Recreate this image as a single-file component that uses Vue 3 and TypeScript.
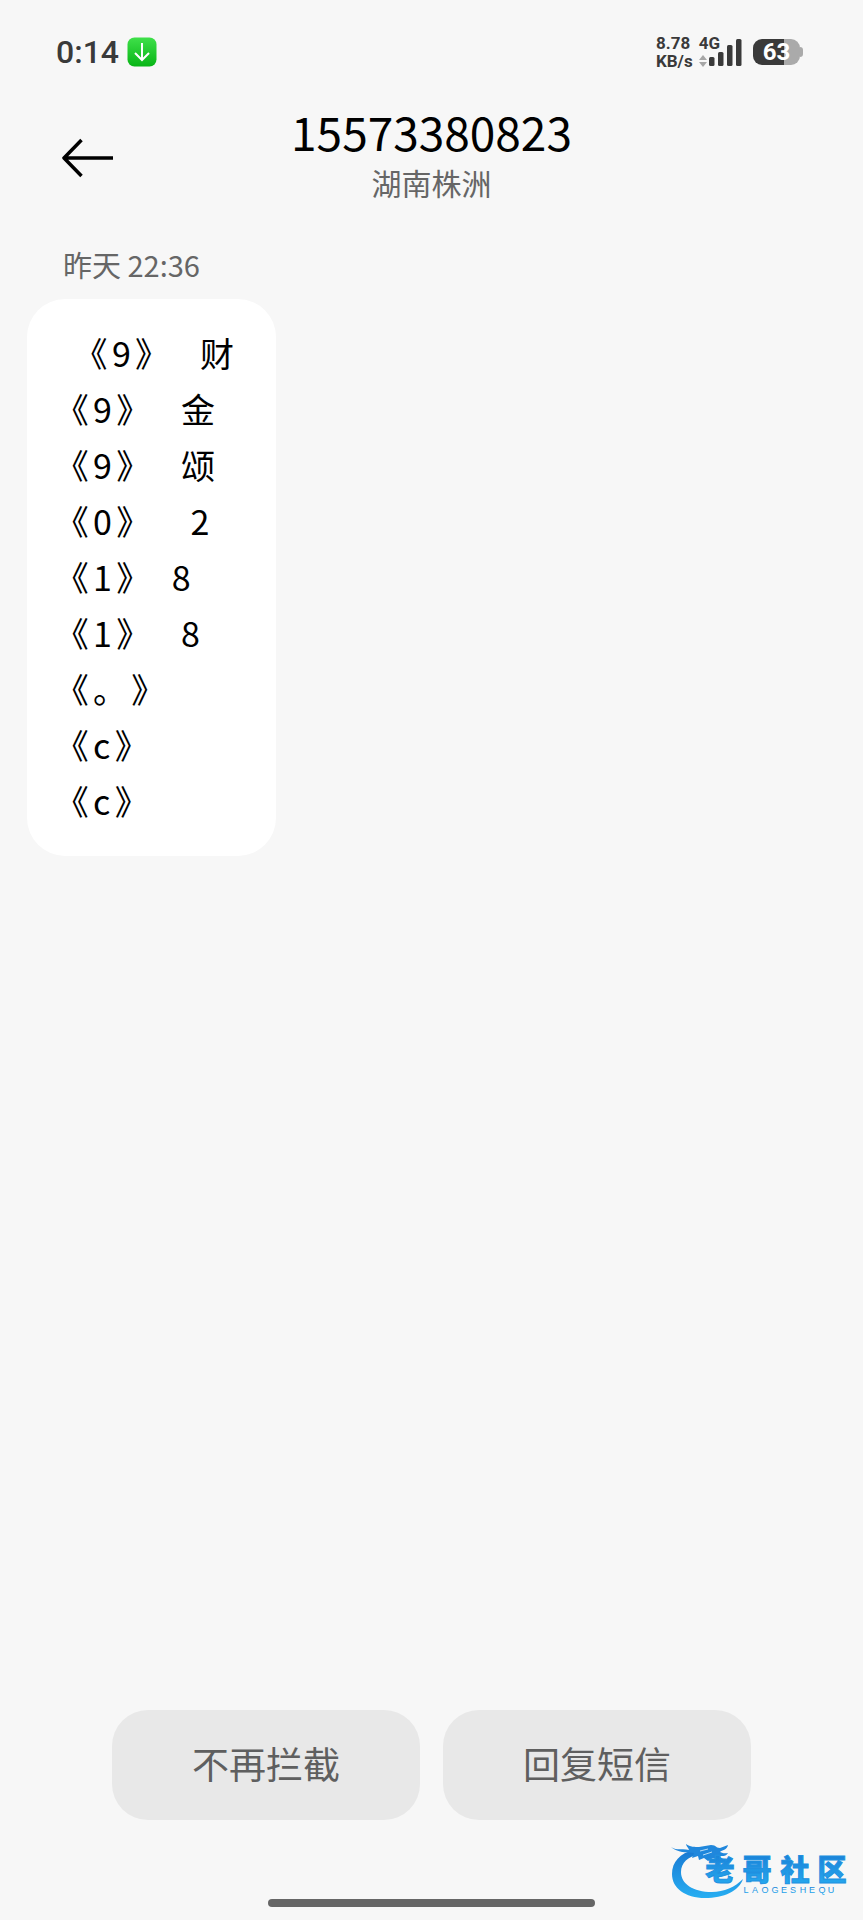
<script setup lang="ts">
interface Line {
  indent: string
  mark: string
  gap: string
  value: string
}

const sp = (n: number): string => '\u00a0'.repeat(n)

const lines: Line[] = [
  { indent: sp(2), mark: '9', gap: sp(5), value: '财' },
  { indent: '', mark: '9', gap: sp(5), value: '金' },
  { indent: '', mark: '9', gap: sp(5), value: '颂' },
  { indent: '', mark: '0', gap: sp(6), value: '2' },
  { indent: '', mark: '1', gap: sp(4), value: '8' },
  { indent: '', mark: '1', gap: sp(5), value: '8' },
  { indent: '', mark: '。', gap: '', value: '' },
  { indent: '', mark: 'c', gap: '', value: '' },
  { indent: '', mark: 'c', gap: '', value: '' },
]

const actions: string[] = ['不再拦截', '回复短信']
</script>

<template>
  <div class="screen">
    <div class="status">
      <div class="status-left">
        <span class="clock">0:14</span>
        <svg class="download" viewBox="0 0 30 30" aria-hidden="true">
          <defs>
            <linearGradient id="green" x1="0" y1="0" x2="0" y2="1">
              <stop offset="0" stop-color="#3fe04a" />
              <stop offset="1" stop-color="#08b516" />
            </linearGradient>
          </defs>
          <rect x="0.5" y="0.5" width="29" height="29" rx="7" fill="url(#green)" />
          <path d="M15 6V23M8 16L15 23L22 16" fill="none" stroke="#fff" stroke-width="2" />
        </svg>
      </div>
      <div class="status-right">
        <div class="speed"><span>8.78</span><span>KB/s</span></div>
        <div class="network">
          <span>4G</span>
          <svg class="updown" viewBox="0 0 8 12" aria-hidden="true">
            <path d="M4 0L8 5H0ZM4 12L8 7H0Z" fill="#a6a6a6" />
          </svg>
        </div>
        <svg class="bars" viewBox="0 0 34 27" aria-hidden="true">
          <g fill="#3a3a3a">
            <rect x="0" y="18" width="5.500" height="9" rx="1.500" />
            <rect x="9" y="13" width="5.500" height="14" rx="1.500" />
            <rect x="18" y="6" width="5.500" height="21" rx="1.500" />
            <rect x="27" y="0" width="5.500" height="27" rx="1.500" />
          </g>
        </svg>
        <div class="battery"><span class="cell">63</span><span class="nub"></span></div>
      </div>
    </div>

    <header class="header">
      <button class="back" type="button" aria-label="返回">
        <svg viewBox="0 0 52 40" aria-hidden="true">
          <path d="M51 20H2M19.500 2L2 20L19.500 38" fill="none" stroke="#000" stroke-width="3.500" stroke-linejoin="round" />
        </svg>
      </button>
      <div class="contact">
        <h1>15573380823</h1>
        <p>湖南株洲</p>
      </div>
    </header>

    <main class="thread">
      <time class="date">昨天 22:36</time>
      <div class="bubble">
        <p v-for="(line, i) in lines" :key="i" class="line"><span class="gap">{{ line.indent }}</span><span class="open">《</span>{{ line.mark }}<span class="close">》</span><span class="gap">{{ line.gap }}</span>{{ line.value }}</p>
      </div>
    </main>

    <footer class="footer">
      <div class="actions">
        <button v-for="label in actions" :key="label" type="button" class="action">{{ label }}</button>
      </div>
      <div class="home"></div>
    </footer>

    <svg class="watermark" viewBox="0 0 180 60" role="img" aria-label="老哥社区">
      <defs>
        <linearGradient id="blue" x1="0" y1="0" x2="0" y2="1">
          <stop offset="0" stop-color="#1878d2" />
          <stop offset="1" stop-color="#27aef2" />
        </linearGradient>
      </defs>
      <path d="M24 8C10 11 2 20 2 32C2 46 15 56 35 56C54 56 69 49 73 37C65 45 54 50 42 50C23 50 11 42 11 30C11 21 18 14 29 13Z" fill="url(#blue)" />
      <path d="M1 5C7 9 13 6 19 8C18 5 16 4 16 2C20 5 25 5 29 5L41 3C47 3 45 6 50 6L58 3C57 8 52 8 50 10C54 12 56 11 58 11C56 15 52 14 48 14C52 16 53 17 57 18C51 20 47 18 43 16L38 19L34 16L29 18L28 14L22 16L24 11C16 10 8 11 1 5Z" fill="#2087dc" />
      <path d="M30 9L38 7M33 13L42 10" stroke="#b9dcf5" stroke-width="1" />
      <g fill="url(#blue)" text-anchor="middle">
        <text class="brand" x="50 87 125 162" y="39">老哥社区</text>
        <text class="latin" x="76 85 95 105 114 123 133 142 152 161" y="51">LAOGESHEQU</text>
      </g>
    </svg>
  </div>
</template>

<style>
body {
  margin: 0;
  background: #f7f7f7;
}
</style>

<style scoped>
.screen {
  position: relative;
  display: flex;
  flex-direction: column;
  min-height: 100vh;
  box-sizing: border-box;
  background: #f7f7f7;
  color: #000;
  font-family: "Noto Sans CJK SC", "Noto Sans", sans-serif;
}
h1, p {
  margin: 0;
  font-weight: 400;
}
button {
  border: 0;
  font-family: inherit;
  cursor: pointer;
}
.status {
  display: flex;
  justify-content: space-between;
  align-items: center;
  height: 104px;
  padding: 0 60px 0 56px;
  color: #3a3a3a;
  font-family: Roboto, "Noto Sans", sans-serif;
}
.status-left, .status-right {
  display: flex;
  align-items: center;
}
.status-left {
  gap: 8px;
}
.clock {
  font-size: 32px;
  line-height: 40px;
  font-weight: 500;
}
.download {
  width: 30px;
  height: 30px;
}
.speed, .network {
  display: flex;
  flex-direction: column;
  font-size: 17px;
  line-height: 18px;
  font-weight: 700;
}
.network {
  height: 36px;
  margin-left: 6px;
}
.updown {
  width: 8px;
  height: 12px;
  margin-top: 3px;
}
.bars {
  width: 34px;
  height: 27px;
  margin-left: -11px;
}
.battery {
  display: flex;
  align-items: center;
  margin-left: 10px;
}
.cell {
  width: 47px;
  height: 26px;
  border-radius: 9px;
  background: linear-gradient(to right, #3a3a3a 66%, #aaa 66%);
  color: #fff;
  font-size: 24px;
  line-height: 27px;
  font-weight: 700;
  text-align: center;
}
.nub {
  width: 3px;
  height: 10px;
  border-radius: 0 3px 3px 0;
  background: #aaa;
}
.header {
  display: grid;
  grid-template-columns: 1fr auto 1fr;
  align-items: center;
  height: 108px;
  padding: 0 62px;
}
.back {
  justify-self: start;
  width: 52px;
  height: 40px;
  padding: 0;
  background: none;
}
.back svg {
  display: block;
}
.contact {
  padding-bottom: 6px;
  text-align: center;
}
h1 {
  font-size: 46px;
  line-height: 54px;
}
.contact p {
  color: #666;
  font-size: 30px;
  line-height: 48px;
}
.thread {
  flex: 1;
  display: flex;
  flex-direction: column;
  align-items: flex-start;
  padding: 32px 27px;
}
.date {
  padding-left: 36px;
  color: #666;
  font-size: 29px;
  line-height: 40px;
}
.bubble {
  margin-top: 15px;
  padding: 26px 42px 27px 44px;
  border-radius: 38px;
  background: #fff;
}
.line {
  font-size: 34px;
  line-height: 56px;
  white-space: pre;
  text-spacing-trim: space-all;
}
.open, .close {
  font-feature-settings: "palt";
}
.open {
  margin-right: 5px;
}
.close {
  margin-left: 5px;
}
.gap {
  font-family: "Liberation Sans", sans-serif;
  line-height: 20px;
}
.actions {
  display: grid;
  grid-template-columns: 1fr 1fr;
  gap: 23px;
  padding: 0 112px;
}
.action {
  height: 110px;
  padding: 0 0 4px;
  border-radius: 36px;
  background: #e8e8e8;
  color: #5f5f5f;
  font-size: 37px;
}
.home {
  width: 38%;
  height: 8px;
  margin: 79px auto 13px;
  border-radius: 4px;
  background: #666;
}
.watermark {
  position: absolute;
  right: 13px;
  bottom: 18px;
  width: 180px;
  height: 60px;
}
.brand {
  font-size: 29px;
  font-weight: 900;
  stroke: #2090e0;
  stroke-width: 1px;
}
.latin {
  font-family: "Liberation Sans", sans-serif;
  font-size: 9px;
}
</style>
